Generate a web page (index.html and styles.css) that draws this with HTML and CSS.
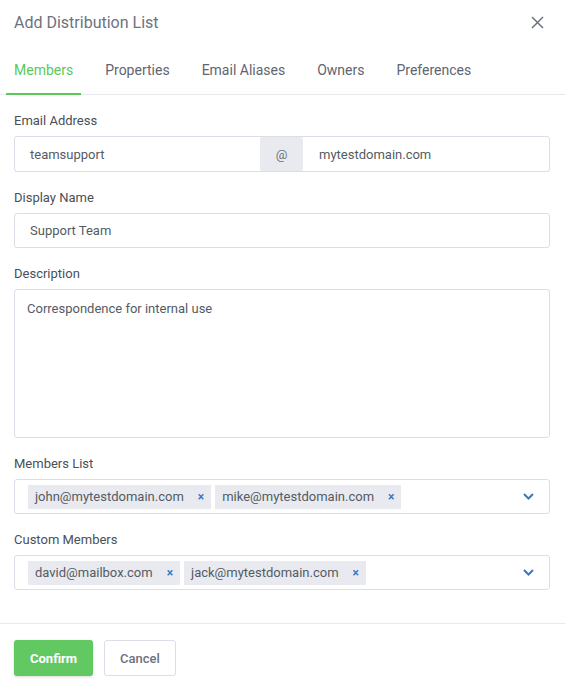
FILE: index.html
```html
<!DOCTYPE html>
<html>
<head>
<meta charset="utf-8">
<link rel="stylesheet" href="styles.css">
</head>
<body>
<div class="dialog">
  <div class="header">
    <div class="title">Add Distribution List</div>
    <svg class="close" width="13" height="13" viewBox="0 0 13 13"><path d="M1 1L12 12M12 1L1 12" stroke="#6c727f" stroke-width="1.5" fill="none"/></svg>
  </div>
  <div class="tabs">
    <div class="tab active">Members</div>
    <div class="tab">Properties</div>
    <div class="tab">Email Aliases</div>
    <div class="tab">Owners</div>
    <div class="tab">Preferences</div>
  </div>
  <div class="form">
    <div class="group">
      <div class="label">Email Address</div>
      <div class="email-input">
        <div class="part">teamsupport</div>
        <div class="addon">@</div>
        <div class="part part-right">mytestdomain.com</div>
      </div>
    </div>
    <div class="group">
      <div class="label">Display Name</div>
      <div class="input">Support Team</div>
    </div>
    <div class="group">
      <div class="label">Description</div>
      <div class="textarea">Correspondence for internal use</div>
    </div>
    <div class="group">
      <div class="label">Members List</div>
      <div class="select">
        <span class="chip">john@mytestdomain.com<span class="x">×</span></span>
        <span class="chip">mike@mytestdomain.com<span class="x">×</span></span>
        <svg class="chev" width="11" height="7" viewBox="0 0 11 7"><path d="M1 1L5.5 5.5L10 1" stroke="#3a78c4" stroke-width="2" fill="none"/></svg>
      </div>
    </div>
    <div class="group">
      <div class="label">Custom Members</div>
      <div class="select">
        <span class="chip">david@mailbox.com<span class="x">×</span></span>
        <span class="chip">jack@mytestdomain.com<span class="x">×</span></span>
        <svg class="chev" width="11" height="7" viewBox="0 0 11 7"><path d="M1 1L5.5 5.5L10 1" stroke="#3a78c4" stroke-width="2" fill="none"/></svg>
      </div>
    </div>
  </div>
  <div class="footer">
    <button class="btn btn-confirm">Confirm</button>
    <button class="btn btn-cancel">Cancel</button>
  </div>
</div>
</body>
</html>
```

FILE: styles.css
```css
html, body {
  margin: 0;
  padding: 0;
  background: #ffffff;
  font-family: Roboto, "Liberation Sans", sans-serif;
}
.dialog {
  width: 565px;
}
.header {
  height: 45px;
  display: flex;
  align-items: center;
  justify-content: space-between;
  padding: 0 21px 0 14px;
}
.title {
  font-size: 16px;
  color: #6c727f;
}
.tabs {
  display: flex;
  gap: 16px;
  padding-left: 6px;
  border-bottom: 1px solid #e8e8ee;
}
.tab {
  padding: 15px 8px 13px;
  line-height: 20px;
  font-size: 14px;
  color: #5f6570;
  border-bottom: 2px solid transparent;
  margin-bottom: -1px;
}
.tab.active {
  color: #5cc85c;
  border-bottom-color: #5cc85c;
}
.form {
  padding: 18px 15px 0 14px;
}
.group {
  margin-bottom: 18px;
}
.group:last-child {
  margin-bottom: 0;
}
.label {
  font-size: 13px;
  line-height: 16px;
  color: #495057;
  margin-bottom: 7px;
}
.email-input {
  display: flex;
  height: 36px;
  box-sizing: border-box;
  border: 1px solid #dcdde6;
  border-radius: 3px;
  font-size: 13px;
  color: #545b64;
}
.part {
  flex: 1;
  display: flex;
  align-items: center;
  padding-left: 15px;
}
.part-right {
  padding-left: 16px;
}
.addon {
  width: 43px;
  background: #e9eaef;
  display: flex;
  align-items: center;
  justify-content: center;
  color: #6c757d;
  border-radius: 2px;
}
.input {
  height: 35px;
  box-sizing: border-box;
  border: 1px solid #dcdde6;
  border-radius: 3px;
  display: flex;
  align-items: center;
  padding-left: 15px;
  font-size: 13px;
  color: #545b64;
}
.textarea {
  height: 149px;
  box-sizing: border-box;
  border: 1px solid #dcdde6;
  border-radius: 3px;
  padding: 9px 12px;
  font-size: 13px;
  line-height: 20px;
  color: #545b64;
}
.select {
  height: 35px;
  box-sizing: border-box;
  border: 1px solid #dcdde6;
  border-radius: 3px;
  display: flex;
  align-items: center;
  gap: 4px;
  padding: 0 15px 0 13px;
}
.chip {
  height: 24px;
  display: inline-flex;
  align-items: center;
  background: #e9eaef;
  padding: 0 7px 0 7px;
  font-size: 13px;
  color: #545b64;
}
.x {
  margin-left: 14px;
  color: #3a78c4;
  font-size: 12px;
  font-weight: 700;
}
.chev {
  margin-left: auto;
}
.footer {
  margin-top: 33px;
  border-top: 1px solid #e8e8ee;
  padding: 16px 14px;
  display: flex;
  gap: 11px;
}
.btn {
  height: 36px;
  padding: 0 16px;
  font-family: Roboto, "Liberation Sans", sans-serif;
  font-size: 13px;
  border-radius: 3px;
}
.btn-confirm {
  background: #62c962;
  border: none;
  color: #ffffff;
  font-weight: 700;
  box-shadow: 0 1px 3px rgba(0,0,0,0.15);
}
.btn-cancel {
  background: #ffffff;
  border: 1px solid #dcdde6;
  color: #6c727f;
  font-weight: 500;
  padding: 0 15px;
}
```
